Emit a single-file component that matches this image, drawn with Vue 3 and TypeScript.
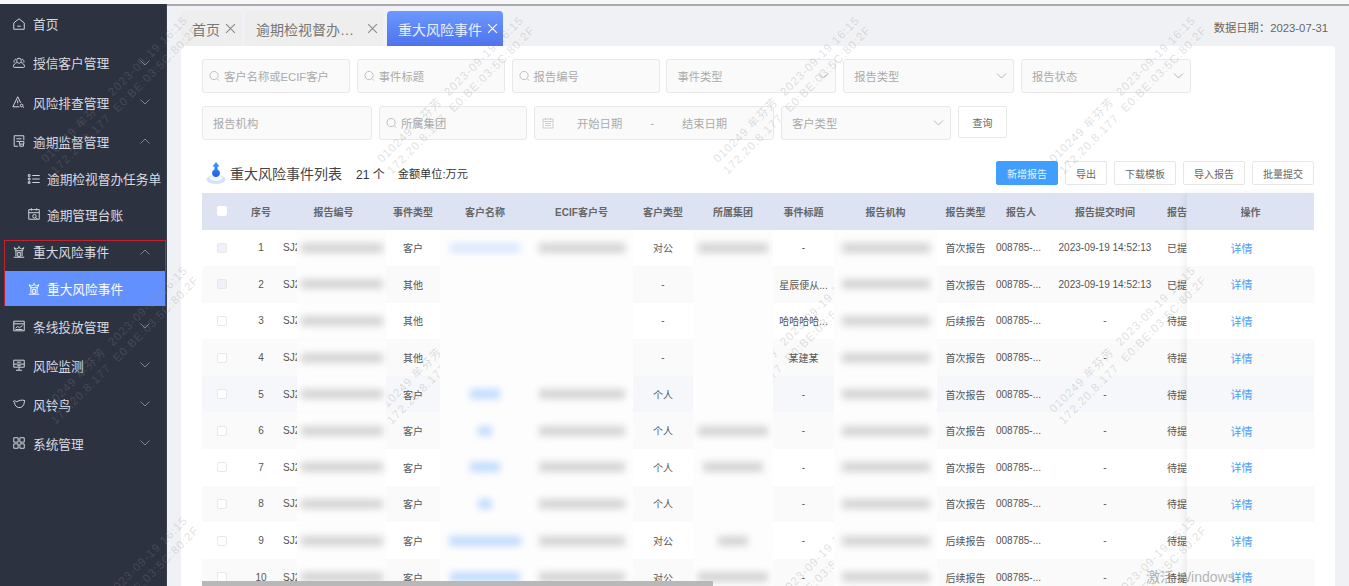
<script setup lang="ts">
interface MenuItem {
  label: string;
  icon: string;
  arrow?: 'up' | 'down';
  child?: boolean;
  active?: boolean;
}

interface Row {
  no: number;
  type: string;
  name: number;
  ecif: boolean;
  custType: string;
  group: number;
  title: string;
  reportType: string;
  time: string;
  status: string;
}

const icons: Record<string, string> = {
  home: 'M2 6.800 8 2l6 4.800V14H2ZM6 10.500h4',
  users: 'M8 2.500a2.600 2.600 0 0 1 2.600 2.800c0 1.600-1.100 3-2.600 3s-2.600-1.400-2.600-3A2.600 2.600 0 0 1 8 2.500ZM5.600 7.500C3.500 8.200 1.800 9.700 1.600 12c0 .6.4 1 1 1h10.800c.6 0 1-.4 1-1-.2-2.300-1.900-3.800-4-4.500M4.500 3.500C2.800 4 2 5.500 2.500 7.500M11.500 3.500c1.700.5 2.500 2 2 4',
  warn: 'M6.500 2 1 13.500h7.500M6.500 2l3.500 7M6.500 6v3.500M6.500 11v.5M12.500 12a1.500 1.500 0 1 1-3 0 1.500 1.500 0 0 1 3 0ZM12.300 13.200l1.500 1.300',
  doc: 'M7 14H2.500V2h11v5M5 5.500h6M5 8.500h3M8.500 8.500h5v3h-5ZM9 11.500v2.500h4v-2.500',
  list: 'M1.500 3h2v2h-2ZM1.500 7h2v2h-2ZM1.500 11h2v2h-2ZM6 4h8.500M6 8h8.500M6 12h8.500',
  ledger: 'M2 3h12v11H2ZM2 6.500h12M5 1.500V4M11 1.500V4M10.500 10.500a2 2 0 1 1-4 0 2 2 0 0 1 4 0ZM10 12l2 2',
  temple: 'M8 1v2M2.500 3l1.500 3.500h8L13.500 3 11 4.500 8 3 5 4.500ZM4.500 6.500v6.500M11.500 6.500v6.500M6.500 8.500h3v4.500h-3ZM2 14h12',
  chart: 'M2 2.500h12v11H2ZM2 5.500h12M4 10.500l2.500-2 2 1.500 3.500-2.500M4 12h8',
  monitor: 'M2 2.500h12v8H2ZM2 7h12M5.500 4.800h5M8 10.500V14M4.500 14h7M6 8.800h4',
  bird: 'M1.500 5c1.500-1 3-.5 4 .5 2-1.500 5.500-2.500 9-1.500-.5 1.500-.5 3-1 4.500-1 2.500-3.500 4-6 3.500-3-.5-4.500-3-4.500-5.500Z',
  grid: 'M2 2h5v5H2ZM9 2h5v5H9ZM2 9h5v5H2ZM9 9h5v5H9Z',
};

const menu: MenuItem[] = [
  { label: '首页', icon: 'home' },
  { label: '授信客户管理', icon: 'users', arrow: 'down' },
  { label: '风险排查管理', icon: 'warn', arrow: 'down' },
  { label: '逾期监督管理', icon: 'doc', arrow: 'up' },
  { label: '逾期检视督办任务单', icon: 'list', child: true },
  { label: '逾期管理台账', icon: 'ledger', child: true },
];

const riskMenu: MenuItem[] = [
  { label: '重大风险事件', icon: 'temple', arrow: 'up' },
  { label: '重大风险事件', icon: 'temple', child: true, active: true },
];

const menuAfter: MenuItem[] = [
  { label: '条线投放管理', icon: 'chart', arrow: 'down' },
  { label: '风险监测', icon: 'monitor', arrow: 'down' },
  { label: '风铃鸟', icon: 'bird', arrow: 'down' },
  { label: '系统管理', icon: 'grid', arrow: 'down' },
];

const tabs = [
  { label: '首页' },
  { label: '逾期检视督办…', wide: true },
  { label: '重大风险事件', active: true },
];

const firstFilters = ['客户名称或ECIF客户', '事件标题', '报告编号'];
const actions = ['导出', '下载模板', '导入报告', '批量提交'];

const columns = ['序号', '报告编号', '事件类型', '客户名称', 'ECIF客户号', '客户类型', '所属集团', '事件标题', '报告机构', '报告类型', '报告人', '报告提交时间'];

const stamp = '2023-09-19 14:52:13';

const rows: Row[] = [
  { no: 1, type: '客户', name: 70, ecif: true, custType: '对公', group: 70, title: '-', reportType: '首次报告', time: stamp, status: '已提交' },
  { no: 2, type: '其他', name: 0, ecif: false, custType: '-', group: 0, title: '星辰便从...', reportType: '首次报告', time: stamp, status: '已提交' },
  { no: 3, type: '其他', name: 0, ecif: false, custType: '-', group: 0, title: '哈哈哈哈...', reportType: '后续报告', time: '-', status: '待提交' },
  { no: 4, type: '其他', name: 0, ecif: false, custType: '-', group: 0, title: '某建某', reportType: '首次报告', time: '-', status: '待提交' },
  { no: 5, type: '客户', name: 30, ecif: true, custType: '个人', group: 0, title: '-', reportType: '首次报告', time: '-', status: '待提交' },
  { no: 6, type: '客户', name: 14, ecif: true, custType: '个人', group: 70, title: '-', reportType: '首次报告', time: '-', status: '待提交' },
  { no: 7, type: '客户', name: 30, ecif: true, custType: '个人', group: 60, title: '-', reportType: '首次报告', time: '-', status: '待提交' },
  { no: 8, type: '客户', name: 14, ecif: true, custType: '个人', group: 0, title: '-', reportType: '首次报告', time: '-', status: '待提交' },
  { no: 9, type: '客户', name: 72, ecif: true, custType: '对公', group: 30, title: '-', reportType: '后续报告', time: '-', status: '待提交' },
  { no: 10, type: '客户', name: 70, ecif: true, custType: '对公', group: 70, title: '-', reportType: '后续报告', time: '-', status: '待提交' },
];

const marks = Array.from({ length: 15 }, (_, i) => i);
</script>

<template>
  <div class="page">
    <div class="top-line"></div>
    <div class="shell">
      <aside class="sidebar">
        <div
          v-for="item in menu"
          :key="item.label"
          class="menu-item"
          :class="{ child: item.child }"
        >
          <svg class="menu-icon" viewBox="0 0 16 16"><path :d="icons[item.icon]" /></svg>
          <span>{{ item.label }}</span>
          <svg v-if="item.arrow" class="arrow" :class="item.arrow" viewBox="0 0 10 6"><path d="M.5.5 5 5 9.500.5" /></svg>
        </div>
        <div class="risk-box">
          <div
            v-for="item in riskMenu"
            :key="item.label + item.child"
            class="menu-item"
            :class="{ child: item.child, active: item.active }"
          >
            <svg class="menu-icon" viewBox="0 0 16 16"><path :d="icons[item.icon]" /></svg>
            <span>{{ item.label }}</span>
            <svg v-if="item.arrow" class="arrow" :class="item.arrow" viewBox="0 0 10 6"><path d="M.5.5 5 5 9.500.5" /></svg>
          </div>
        </div>
        <div v-for="item in menuAfter" :key="item.label" class="menu-item after">
          <svg class="menu-icon" viewBox="0 0 16 16"><path :d="icons[item.icon]" /></svg>
          <span>{{ item.label }}</span>
          <svg class="arrow" :class="item.arrow" viewBox="0 0 10 6"><path d="M.5.5 5 5 9.500.5" /></svg>
        </div>
      </aside>

      <main class="main">
        <div class="tabbar">
          <div class="tabs">
            <div
              v-for="tab in tabs"
              :key="tab.label"
              class="tab"
              :class="{ active: tab.active, wide: tab.wide }"
            >
              <span class="tab-label">{{ tab.label }}</span>
              <svg class="tab-close" viewBox="0 0 10 10"><path d="M1 1l8 8M9 1l-8 8" /></svg>
            </div>
          </div>
          <div class="data-date">数据日期：2023-07-31</div>
        </div>

        <section class="card">
          <div class="filters">
            <div v-for="f in firstFilters" :key="f" class="field search">
              <svg class="search-icon" viewBox="0 0 12 12"><circle cx="5.500" cy="5.500" r="4.500" /><path d="M9 9l2 2" /></svg>
              <span>{{ f }}</span>
            </div>
            <div class="field select"><span>事件类型</span><svg class="caret" viewBox="0 0 10 6"><path d="M.5.5 5 5 9.500.5" /></svg></div>
            <div class="field select"><span>报告类型</span><svg class="caret" viewBox="0 0 10 6"><path d="M.5.5 5 5 9.500.5" /></svg></div>
            <div class="field select"><span>报告状态</span><svg class="caret" viewBox="0 0 10 6"><path d="M.5.5 5 5 9.500.5" /></svg></div>
          </div>
          <div class="filters second">
            <div class="field select plain"><span>报告机构</span></div>
            <div class="field search">
              <svg class="search-icon" viewBox="0 0 12 12"><circle cx="5.500" cy="5.500" r="4.500" /><path d="M9 9l2 2" /></svg>
              <span>所属集团</span>
            </div>
            <div class="field date">
              <svg class="cal-icon" viewBox="0 0 12 12"><path d="M1 2h10v9H1ZM1 4.500h10M3.500 1v2M8.500 1v2M3 6.500h6M3 8.500h6" /></svg>
              <span class="date-a">开始日期</span>
              <span class="date-sep">-</span>
              <span class="date-b">结束日期</span>
            </div>
            <div class="field select"><span>客户类型</span><svg class="caret" viewBox="0 0 10 6"><path d="M.5.5 5 5 9.500.5" /></svg></div>
            <button class="query" type="button">查询</button>
          </div>

          <div class="list-head">
            <svg class="title-icon" viewBox="0 0 20 24">
              <defs>
                <linearGradient id="pin" x1="0" y1="0" x2="0" y2="1">
                  <stop offset="0" stop-color="#3f9bff" />
                  <stop offset="1" stop-color="#1c5fe0" />
                </linearGradient>
              </defs>
              <ellipse cx="10" cy="18.500" rx="9.500" ry="4.500" fill="#d5e2fb" />
              <ellipse cx="10" cy="17" rx="6.500" ry="3" fill="#f3f7ff" />
              <path d="M10 1l3.500 4.500h-2v3a3.500 3.500 0 0 1 2.500 3.200c0 2.300-1.800 4.300-4 4.300s-4-2-4-4.300a3.500 3.500 0 0 1 2.500-3.200v-3h-2Z" fill="url(#pin)" />
            </svg>
            <h2 class="list-title">重大风险事件列表</h2>
            <span class="count">21 个</span>
            <span class="unit">金额单位:万元</span>
            <div class="actions">
              <button class="btn primary" type="button">新增报告</button>
              <button v-for="a in actions" :key="a" class="btn" :class="{ short: a === '导出' }" type="button">{{ a }}</button>
            </div>
          </div>

          <div class="table">
            <div class="table-scroll">
              <div class="t-row t-head">
                <div class="cell"><i class="check head-check"></i></div>
                <div v-for="c in columns" :key="c" class="cell">{{ c }}</div>
                <div class="cell status">报告状态</div>
              </div>
              <div
                v-for="row in rows"
                :key="row.no"
                class="t-row"
                :class="{ stripe: row.no % 2 === 0, hover: row.no === 5 }"
              >
                <div class="cell"><i class="check" :class="{ tinted: row.no < 3 }"></i></div>
                <div class="cell">{{ row.no }}</div>
                <div class="cell code">
                  <span>SJ2</span>
                  <div class="mask"><b class="smear"></b></div>
                </div>
                <div class="cell">{{ row.type }}</div>
                <div class="cell mask-cell"><b v-if="row.name" class="smear link" :class="{ faint: row.no === 1 }" :style="{ width: row.name + 'px' }"></b></div>
                <div class="cell mask-cell"><b v-if="row.ecif" class="smear" style="width: 86px"></b></div>
                <div class="cell">{{ row.custType }}</div>
                <div class="cell mask-cell"><b v-if="row.group" class="smear" :style="{ width: row.group + 'px' }"></b></div>
                <div class="cell">{{ row.title }}</div>
                <div class="cell mask-cell"><b class="smear" style="width: 88px"></b></div>
                <div class="cell">{{ row.reportType }}</div>
                <div class="cell submitter">008785-...</div>
                <div class="cell">{{ row.time }}</div>
                <div class="cell status">{{ row.status }}</div>
              </div>
              <div class="scrollbar"></div>
            </div>
            <div class="table-fixed">
              <div class="t-row t-head"><div class="cell">操作</div></div>
              <div
                v-for="row in rows"
                :key="row.no"
                class="t-row"
                :class="{ stripe: row.no % 2 === 0, hover: row.no === 5 }"
              >
                <div class="cell detail">详情</div>
              </div>
            </div>
          </div>
        </section>
      </main>
    </div>

    <div class="watermarks">
      <div v-for="m in marks" :key="m" class="mark">
        <p>010249 牟芬芳 &nbsp;2023-09-19 16:15</p>
        <p>172.20.8.177 &nbsp;E0:BE:03:5C:80:2F</p>
      </div>
    </div>
    <div class="activate">激活 Windows</div>
  </div>
</template>

<style scoped>
.page {
  position: relative;
  width: 1349px;
  height: 586px;
  overflow: hidden;
  display: flex;
  flex-direction: column;
  background: #f0f1f4;
  font-family: "Liberation Sans", "Noto Sans CJK SC", sans-serif;
  color: #555;
}

.top-line {
  height: 4px;
  flex: none;
  background: #f7f7f7;
  border-bottom: 2px solid #a9a9a9;
  box-sizing: content-box;
  margin-bottom: -1px;
}

.shell {
  flex: 1;
  display: flex;
  min-height: 0;
}

.sidebar {
  width: 167px;
  flex: none;
  background: #2d3241;
  border-right: 1px solid #3c4150;
  box-sizing: border-box;
  margin-top: -1px;
}

.menu-item {
  height: 39.250px;
  display: flex;
  align-items: center;
  padding-left: 12px;
  font-size: 12.700px;
  color: #d8dbe0;
  position: relative;
  white-space: nowrap;
}

.menu-item.after {
  height: 39px;
}

.menu-item.child {
  height: 35.500px;
  padding-left: 27px;
}

.menu-item.active {
  background: #6290ff;
  color: #fff;
}

.menu-icon {
  width: 14px;
  height: 14px;
  flex: none;
  margin-right: 7px;
  fill: none;
  stroke: #d8dbe0;
  stroke-width: 1.100;
}

.menu-item.child .menu-icon {
  margin-right: 6px;
}

.menu-item.active .menu-icon {
  stroke: #fff;
}

.arrow {
  position: absolute;
  right: 16px;
  top: 50%;
  width: 10px;
  height: 6px;
  margin-top: -3px;
  fill: none;
  stroke: #7f8492;
  stroke-width: 1;
}

.arrow.up {
  transform: rotate(180deg);
}

.risk-box {
  margin-top: 8px;
  margin-left: 4px;
  outline: 1px solid #c4202e;
  outline-offset: -1px;
  position: relative;
}

.risk-box .menu-item {
  height: 31.250px;
  padding-left: 8px;
  padding-bottom: 8px;
  box-sizing: border-box;
}

.risk-box .menu-item .arrow {
  margin-top: -7px;
}

.risk-box .menu-item.child {
  padding: 0 0 0 22px;
  margin: 0 1px 1px;
  height: 34.500px;
}

.main {
  flex: 1;
  min-width: 0;
  padding: 0 14px;
  display: flex;
  flex-direction: column;
}

.tabbar {
  display: flex;
  justify-content: space-between;
  height: 41px;
  flex: none;
  padding-top: 6px;
  box-sizing: border-box;
}

.tabs {
  display: flex;
  gap: 4px;
  height: 35px;
}

.tab {
  display: flex;
  align-items: center;
  padding: 0 5px 0 11px;
  background: #eeeeee;
  border-radius: 4px 4px 0 0;
  font-size: 14px;
  color: #777;
  white-space: nowrap;
}

.tab.wide .tab-label {
  width: 106px;
}

.tab.active {
  background: linear-gradient(#6c98ff, #4e73ec);
  color: #e9efff;
}

.tab-close {
  width: 11px;
  height: 11px;
  margin-left: 5px;
  fill: none;
  stroke: #8a8a8a;
  stroke-width: 1;
}

.tab.active .tab-close {
  stroke: #fff;
}

.data-date {
  font-size: 11.300px;
  color: #666;
  padding: 8px 7px 0 0;
}

.card {
  flex: 1;
  min-height: 0;
  background: #fff;
  border-radius: 4px 4px 0 0;
  padding: 13px 21px 0;
  overflow: hidden;
}

.filters {
  display: grid;
  grid-template-columns: 148px 148px 148px 170px 171px 170px;
  gap: 6.800px;
  height: 34px;
}

.filters.second {
  grid-template-columns: 170px 148px 240px 170px 49px;
  gap: 7px;
  margin-top: 13px;
}

.field {
  display: flex;
  align-items: center;
  border: 1px solid #e8e8e8;
  border-radius: 3px;
  background: #fafafa;
  font-size: 11.300px;
  color: #aaa;
  position: relative;
  white-space: nowrap;
  box-sizing: border-box;
}

.field.search {
  padding-left: 6px;
}

.search-icon {
  width: 11px;
  height: 12px;
  margin-right: 4px;
  fill: none;
  stroke: #bbb;
}

.field.select {
  padding-left: 10px;
}

.caret {
  position: absolute;
  right: 6px;
  top: 50%;
  width: 11px;
  height: 6px;
  margin-top: -3px;
  fill: none;
  stroke: #b5b5b5;
}

.field.date {
  padding-left: 7px;
}

.cal-icon {
  width: 12px;
  height: 12px;
  fill: none;
  stroke: #c4c4c4;
  stroke-width: .8;
}

.date-a {
  margin-left: 23px;
}

.date-sep {
  margin-left: 28px;
}

.date-b {
  margin-left: 28px;
}

.query {
  height: 32px;
  padding: 0;
  border: 1px solid #e8e8e8;
  border-radius: 2px;
  background: #fff;
  font: inherit;
  font-size: 10px;
  color: #666;
}

.list-head {
  display: flex;
  align-items: center;
  height: 24px;
  margin-top: 21px;
  padding-left: 4px;
}

.title-icon {
  width: 20px;
  height: 24px;
  flex: none;
}

.list-title {
  margin: 0 0 0 4px;
  font-size: 14px;
  font-weight: 400;
  color: #444;
}

.count {
  margin-left: 14px;
  font-size: 12px;
  color: #333;
}

.unit {
  margin-left: 13px;
  font-size: 11.200px;
  color: #333;
}

.actions {
  margin-left: auto;
  display: flex;
  gap: 7px;
}

.btn {
  width: 62px;
  height: 24px;
  padding: 0;
  border: 1px solid #e6e6e6;
  border-radius: 2px;
  background: #fff;
  font: inherit;
  font-size: 10px;
  color: #666;
}

.btn.short {
  width: 42px;
}

.btn.primary {
  background: #409eff;
  border-color: #409eff;
  color: #e8f3ff;
}

.table {
  display: flex;
  margin-top: 8px;
  font-size: 10px;
}

.table-scroll {
  width: 985px;
  flex: none;
  overflow: hidden;
  position: relative;
  height: 393px;
}

.table-fixed {
  width: 127px;
  flex: none;
  position: relative;
  box-shadow: -3px 0 6px rgba(0, 0, 0, 0.06);
  background: #fff;
}

.t-row {
  display: grid;
  grid-template-columns: 39px 40px 105px 54px 90px 103px 60px 80px 61px 103px 57px 54px 114px 60px;
  height: 36.600px;
  align-items: center;
  text-align: center;
  color: #555;
  width: 1020px;
}

.table-fixed .t-row {
  display: flex;
  width: 127px;
  justify-content: center;
}

.t-row.stripe {
  background: #fafafa;
}

.t-row.hover {
  background: #f5f7fb;
}

.t-row.t-head {
  background: #dde3f3;
  height: 36.500px;
  font-weight: 700;
  color: #666;
}

.cell {
  height: 100%;
  display: flex;
  align-items: center;
  justify-content: center;
  white-space: nowrap;
  overflow: hidden;
  min-width: 0;
}

.check {
  width: 10px;
  height: 10px;
  border: 1px solid #e8e8e8;
  border-radius: 2px;
  background: #fff;
  box-sizing: border-box;
}

.check.tinted {
  background: #eef1fa;
}

.head-check {
  border-color: #fff;
}

.code {
  justify-content: flex-start;
  padding-left: 2px;
}

.code .mask {
  position: absolute;
  z-index: 2;
  margin-left: 14px;
  width: 89px;
  height: 36px;
  background: #fdfdfd;
  display: flex;
  align-items: center;
  justify-content: center;
}

.code .smear {
  width: 82px;
}

.mask-cell {
  position: relative;
  z-index: 2;
  background: #fdfdfd;
}

.submitter {
  justify-content: flex-start;
  padding-left: 2px;
}

.smear {
  display: block;
  height: 10px;
  width: 80px;
  background: #c4c4c4;
  filter: blur(3.500px);
  opacity: 0.7;
}

.smear.link {
  background: #a9ceff;
}

.smear.faint {
  opacity: 0.4;
}

.status {
  justify-content: flex-start;
  padding-left: 5px;
}

.table-fixed .detail {
  font-size: 11px;
  color: #4a9df8;
  padding-right: 18px;
}

.scrollbar {
  position: absolute;
  z-index: 3;
  left: 0;
  bottom: 0;
  width: 511px;
  height: 5px;
  background: #b8b8b8;
}

.watermarks {
  position: absolute;
  z-index: 1;
  left: -48px;
  top: -30px;
  display: grid;
  grid-template-columns: repeat(5, 336px);
  grid-auto-rows: 250px;
  pointer-events: none;
}

.mark {
  display: flex;
  flex-direction: column;
  justify-content: center;
  align-items: center;
  transform: rotate(-45deg);
  font-size: 11.500px;
  letter-spacing: 1px;
  color: rgba(140, 140, 140, 0.28);
  white-space: nowrap;
}

.mark p {
  margin: 0;
  line-height: 15px;
}

.activate {
  position: absolute;
  z-index: 4;
  left: 1146px;
  top: 566px;
  font-size: 14px;
  color: rgba(130, 130, 130, 0.6);
  pointer-events: none;
}
</style>
